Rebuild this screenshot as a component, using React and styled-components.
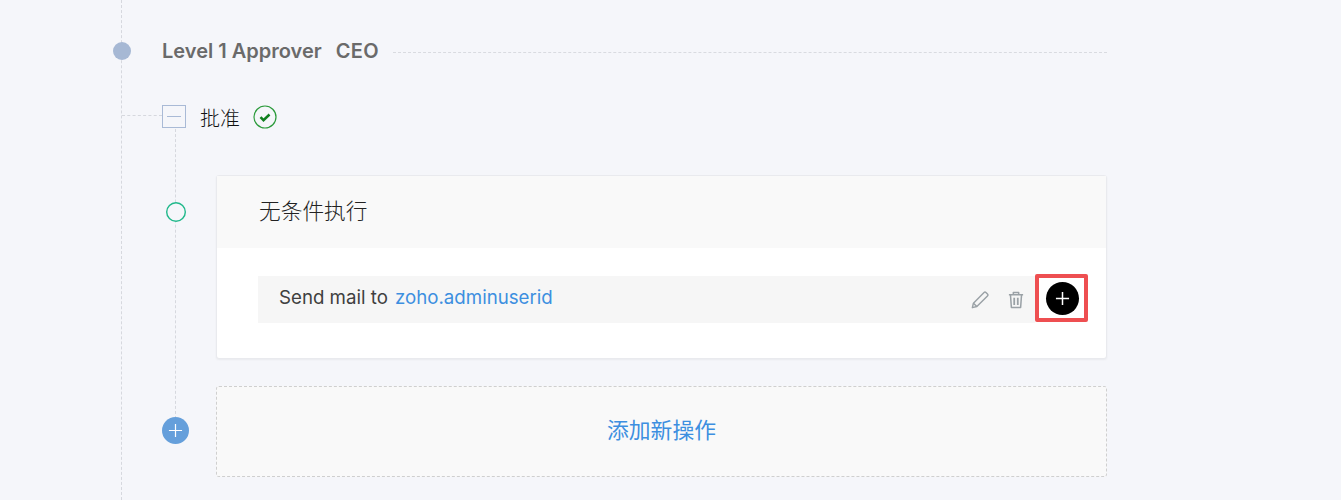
import React from "react";
import styled, { createGlobalStyle } from "styled-components";

const CJK = `"Noto Sans CJK SC", sans-serif`;

const Global = createGlobalStyle`
  html, body { margin: 0; padding: 0; background: #f5f6fa; }
  body { font-family: "Inter", "Noto Sans CJK SC", sans-serif; }
`;
const Page = styled.div`
  height: 500px;
  overflow: hidden;
  background: #f5f6fa;
`;
const Track = styled.div`
  margin-left: 121px;
  width: 986px;
  height: 500px;
  box-sizing: border-box;
  padding-top: 41px;
  border-left: 1px dashed #d6d8de;
`;
const LevelRow = styled.div`
  display: flex;
  align-items: center;
  height: 20px;
  line-height: 20px;
`;
const LevelDot = styled.span`
  flex: none;
  width: 18px;
  height: 18px;
  margin-left: -9px;
  border-radius: 50%;
  background: #a6b8d4;
`;
const LevelText = styled.span`
  margin-left: 31px;
  font-size: 20px;
  font-weight: 600;
  color: #6a6a6a;
  white-space: nowrap;
`;
const LevelRole = styled(LevelText)`
  margin-left: 14px;
  letter-spacing: 0.3px;
`;
const DashLine = styled.span`
  flex: 1;
  margin-left: 14px;
  margin-top: 3px;
  border-top: 1px dashed #d9dbe0;
`;
const ApproveRow = styled.div`
  display: flex;
  align-items: center;
  height: 24px;
  margin-top: 44px;
`;
const Stub = styled.span`
  width: 40px;
  border-top: 1px dashed #d6d8de;
  margin-top: -3px;
`;
const Collapse = styled.span`
  flex: none;
  box-sizing: border-box;
  width: 24px;
  height: 23px;
  margin-top: -1px;
  border: 1px solid #a9bad6;
  display: flex;
  align-items: center;
  justify-content: center;
  &::after {
    content: "";
    width: 14px;
    border-top: 1px solid #a9bad6;
  }
`;
const ApproveText = styled.span`
  margin: 2px 0 0 14px;
  font-family: ${CJK};
  font-size: 20px;
  font-weight: 300;
  line-height: 24px;
  color: #111;
`;
const Check = styled.svg`
  margin-left: 13px;
  flex: none;
`;
const Flow = styled.div`
  margin-left: 53px;
  height: 290px;
  box-sizing: border-box;
  border-left: 1px dashed #d6d8de;
  padding-top: 46px;
`;
const ItemRow = styled.div`
  display: flex;
  align-items: ${(p) => p.$align};
`;
const GreenNode = styled.span`
  flex: none;
  box-sizing: border-box;
  width: 20px;
  height: 20px;
  margin: 27px 0 0 -10px;
  border-radius: 50%;
  box-shadow: inset 0 0 0 1.4px #1fb88a;
  background: #f5f6fa;
`;
const Card = styled.div`
  flex: 1;
  margin-left: 30px;
  height: 184px;
  box-sizing: border-box;
  background: #fff;
  border: 1px solid #e9eaee;
  border-radius: 3px;
  box-shadow: 0 1px 2px rgba(0, 0, 0, 0.05);
`;
const CardHead = styled.div`
  height: 72px;
  background: #f9f9f9;
  display: flex;
  align-items: center;
  padding: 0 0 4px 42px;
  font-family: ${CJK};
  font-size: 21.7px;
  font-weight: 300;
  line-height: 28px;
  color: #222;
  box-sizing: border-box;
`;
const ActionRow = styled.div`
  display: flex;
  align-items: stretch;
  margin: 26px 18px 0 41px;
  height: 48px;
`;
const ActionBody = styled.div`
  flex: 1;
  display: flex;
  align-items: center;
  margin-top: 2px;
  height: 47px;
  background: #f6f6f6;
  padding: 0 11px 4px 21px;
  box-sizing: border-box;
  font-size: 18.7px;
  line-height: 24px;
  color: #3f3f3f;
`;
const Mail = styled.a`
  color: #3d8fe0;
  margin-left: 7px;
`;
const ActionIcons = styled.div`
  margin-left: auto;
  margin-top: 4px;
  display: flex;
  align-items: center;
  gap: 19px;
`;
const Highlight = styled.div`
  flex: none;
  box-sizing: border-box;
  width: 53px;
  height: 48px;
  padding-left: 1px;
  border: 4px solid #ee4f51;
  border-radius: 2px;
  display: flex;
  align-items: center;
  justify-content: center;
  background: #fff;
`;
const PlusBlack = styled.span`
  width: 33px;
  height: 33px;
  border-radius: 50%;
  background: #000;
  display: flex;
  align-items: center;
  justify-content: center;
`;
const BlueNode = styled.span`
  flex: none;
  width: 27px;
  height: 27px;
  margin: -2px 0 0 -14px;
  border-radius: 50%;
  background: #659fdb;
  display: flex;
  align-items: center;
  justify-content: center;
`;
const AddBox = styled.div`
  flex: 1;
  margin-left: 27px;
  height: 91px;
  box-sizing: border-box;
  background: #f9f9f9;
  border: 1px dashed #cfcfcf;
  border-radius: 3px;
  display: flex;
  align-items: center;
  justify-content: center;
  font-family: ${CJK};
  font-size: 21.8px;
  font-weight: 400;
  line-height: 28px;
  padding-bottom: 6px;
  color: #3d8fe0;
`;
const AddRow = styled(ItemRow)`
  margin-top: 27px;
`;

const Plus = ({ size, w = 1.6 }) => (
  <svg width={size} height={size} viewBox="0 0 16 16" fill="none" stroke="#fff" strokeWidth={w}>
    <path d="M8 1v14M1 8h14" />
  </svg>
);

export default function App() {
  return (
    <Page>
      <Global />
      <Track>
        <LevelRow>
          <LevelDot />
          <LevelText>Level 1 Approver</LevelText>
          <LevelRole>CEO</LevelRole>
          <DashLine />
        </LevelRow>
        <ApproveRow>
          <Stub />
          <Collapse />
          <ApproveText>批准</ApproveText>
          <Check width="24" height="24" viewBox="0 0 24 24" fill="none">
            <circle cx="12" cy="12" r="11" stroke="#2a9a3a" strokeWidth="1.2" />
            <path d="M7.5 12.2l3 3 6-5.7" stroke="#0f7f1f" strokeWidth="2.5" />
          </Check>
        </ApproveRow>
        <Flow>
          <ItemRow $align="flex-start">
            <GreenNode />
            <Card>
              <CardHead>无条件执行</CardHead>
              <ActionRow>
                <ActionBody>
                  Send mail to <Mail>zoho.adminuserid</Mail>
                  <ActionIcons>
                    <svg width="18" height="18" viewBox="0 0 20 20" fill="none" stroke="#9aa1a6" strokeWidth="1.6" strokeLinejoin="round">
                      <path d="M1.5 18.5l1.2-5L14.5 1.7a1.5 1.5 0 0 1 2.1 0l1.7 1.7a1.5 1.5 0 0 1 0 2.1L6.5 17.3z" />
                      <path d="M2.7 13.5l3.8 3.8" />
                    </svg>
                    <svg width="16" height="18" viewBox="0 0 18 20" fill="none" stroke="#9aa1a6" strokeWidth="1.7" strokeLinejoin="round">
                      <path d="M1 4.2h16M6 4V1.5h6V4M2.8 4.5l1 14h10.4l1-14" />
                      <path d="M7 7.5v8M11 7.5v8" strokeWidth="2" />
                    </svg>
                  </ActionIcons>
                </ActionBody>
                <Highlight>
                  <PlusBlack><Plus size={15} /></PlusBlack>
                </Highlight>
              </ActionRow>
            </Card>
          </ItemRow>
          <AddRow $align="center">
            <BlueNode><Plus size={15} w={1.3} /></BlueNode>
            <AddBox>添加新操作</AddBox>
          </AddRow>
        </Flow>
      </Track>
    </Page>
  );
}
